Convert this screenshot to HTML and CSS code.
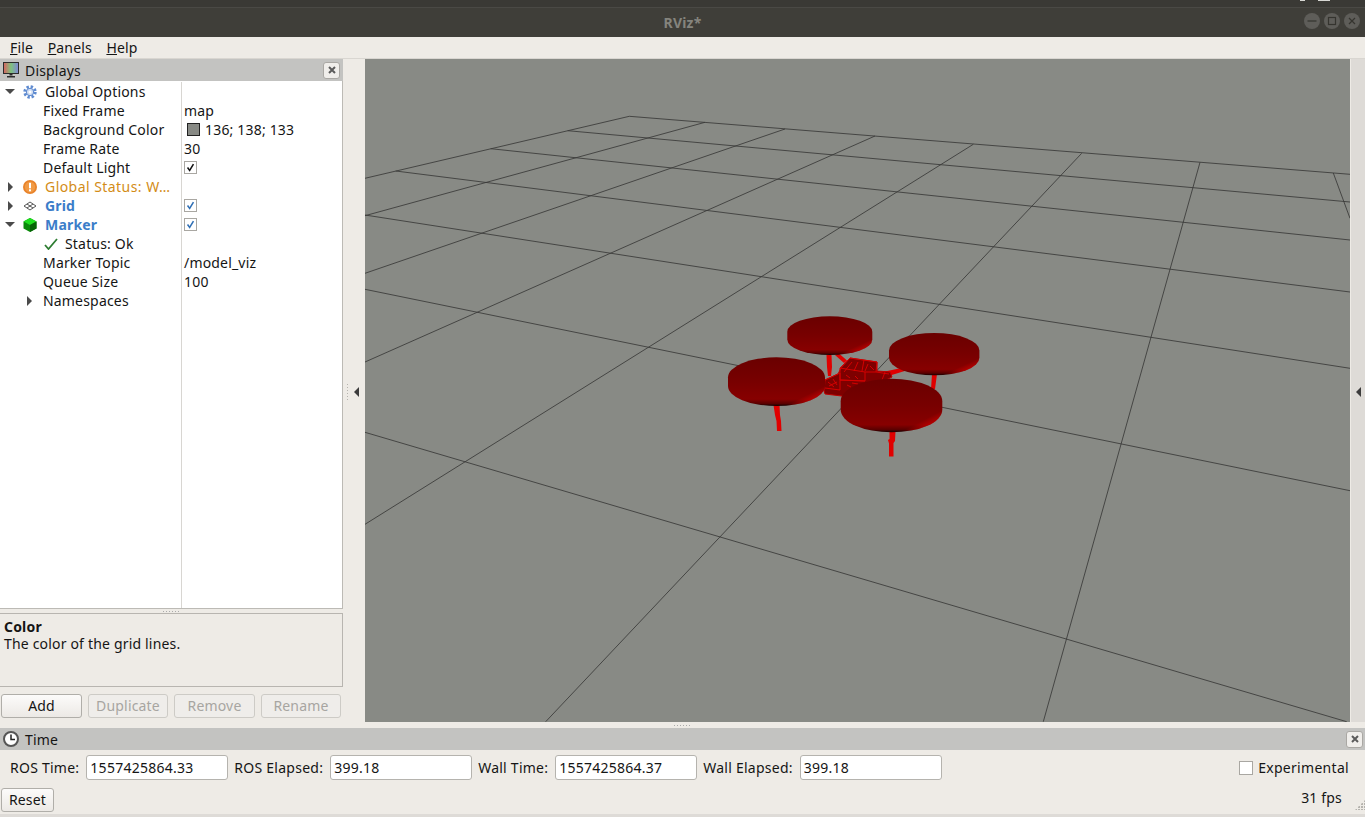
FILE: index.html
```html
<!DOCTYPE html>
<html lang="en">
<head>
<meta charset="utf-8">
<title>RViz*</title>
<link rel="stylesheet" href="styles.css">
</head>
<body>
<div class="app">
  <header class="titlebar">
    <div class="title-top"><span class="sliver sliver-a"></span><span class="sliver sliver-b"></span></div>
    <div class="title-main">
      <span class="title-text">RViz*</span>
      <div class="winbtns">
        <svg class="winbtn" viewBox="0 0 16 16"><circle cx="8" cy="8" r="8" fill="#5e5d59"/><path d="M3.500 8h9" stroke="#35342f" stroke-width="1.200"/></svg>
        <svg class="winbtn" viewBox="0 0 16 16"><circle cx="8" cy="8" r="8" fill="#5e5d59"/><rect x="4.500" y="4.500" width="7" height="7" fill="none" stroke="#35342f" stroke-width="1.200"/></svg>
        <svg class="winbtn" viewBox="0 0 16 16"><circle cx="8" cy="8" r="8" fill="#5e5d59"/><path d="M5 5l6 6M11 5l-6 6" stroke="#35342f" stroke-width="1.200"/></svg>
      </div>
    </div>
  </header>
  <nav class="menubar">
    <span class="menu"><u>F</u>ile</span>
    <span class="menu"><u>P</u>anels</span>
    <span class="menu"><u>H</u>elp</span>
  </nav>
  <main class="main">
    <aside class="dock">
      <div class="dock-title">
        <svg class="ico-monitor" viewBox="0 0 16 16">
          <defs><linearGradient id="scr" x1="0" x2="1" y1="0" y2="0"><stop offset="0" stop-color="#d9605f"/><stop offset=".5" stop-color="#7fc27f"/><stop offset="1" stop-color="#7f86d8"/></linearGradient></defs>
          <rect x=".5" y=".5" width="15" height="11" fill="url(#scr)" stroke="#2c2c2c"/>
          <path d="M6.500 12h3v1.500h-3zM4 14h8v1.500H4z" fill="#2c2c2c"/>
        </svg>
        <span class="dock-name">Displays</span>
        <span class="closebtn"><svg viewBox="0 0 8 8"><path d="M1 1l6 6M7 1L1 7" stroke="#5b5b5b" stroke-width="2"/></svg></span>
      </div>
      <div class="tree">
        <div class="row">
          <div class="name lvl0"><span class="arrow-down"></span>
            <svg class="ico" viewBox="0 0 14 14"><circle cx="7" cy="7" r="5" fill="none" stroke="#5f8bd0" stroke-width="3.400" stroke-dasharray="2.200 1.730"/><circle cx="7" cy="7" r="3.700" fill="#cfdcf2" stroke="#5f8bd0"/><circle cx="7" cy="7" r="1.500" fill="#fff"/></svg>
            <span class="lbl">Global Options</span></div>
          <div class="val"></div>
        </div>
        <div class="row"><div class="name lvl1">Fixed Frame</div><div class="val">map</div></div>
        <div class="row"><div class="name lvl1">Background Color</div><div class="val"><span class="swatch"></span>136; 138; 133</div></div>
        <div class="row"><div class="name lvl1">Frame Rate</div><div class="val">30</div></div>
        <div class="row"><div class="name lvl1">Default Light</div><div class="val"><span class="cb"><svg viewBox="0 0 13 13"><path d="M3 6.500l2.500 3.500L10 2.500" fill="none" stroke="#111" stroke-width="1.800"/></svg></span></div></div>
        <div class="row">
          <div class="name lvl0"><span class="arrow-right"></span>
            <svg class="ico" viewBox="0 0 14 14"><circle cx="7" cy="7" r="7" fill="#e8832a"/><circle cx="7" cy="7" r="5.200" fill="#f19a45"/><rect x="6" y="2.800" width="2" height="5.500" fill="#fff"/><rect x="6" y="9.300" width="2" height="2" fill="#fff"/></svg>
            <span class="lbl warn">Global Status: W…</span></div>
          <div class="val"></div>
        </div>
        <div class="row">
          <div class="name lvl0"><span class="arrow-right"></span>
            <svg class="ico" viewBox="0 0 14 14"><path d="M7 3L13 7 7 11 1 7zM4 5l6 4M10 5L4 9" fill="none" stroke="#555" stroke-width="1"/></svg>
            <span class="lbl strong">Grid</span></div>
          <div class="val"><span class="cb"><svg viewBox="0 0 13 13"><path d="M3 6.500l2.500 3.500L10 2.500" fill="none" stroke="#2f6fb5" stroke-width="1.800"/></svg></span></div>
        </div>
        <div class="row">
          <div class="name lvl0"><span class="arrow-down"></span>
            <svg class="ico" viewBox="0 0 14 14"><path d="M7 0l6.500 3.500v7L7 14 .5 10.500v-7z" fill="#0a8a0a"/><path d="M7 0l6.500 3.500L7 7 .5 3.500z" fill="#1fe01f"/><path d="M7 7l6.500-3.500v7L7 14z" fill="#056405"/></svg>
            <span class="lbl strong">Marker</span></div>
          <div class="val"><span class="cb"><svg viewBox="0 0 13 13"><path d="M3 6.500l2.500 3.500L10 2.500" fill="none" stroke="#2f6fb5" stroke-width="1.800"/></svg></span></div>
        </div>
        <div class="row"><div class="name lvl1"><svg class="ico-check" viewBox="0 0 14 12"><path d="M1 7l3.500 4L13 1" fill="none" stroke="#2e7d32" stroke-width="1.800"/></svg>Status: Ok</div><div class="val"></div></div>
        <div class="row"><div class="name lvl1">Marker Topic</div><div class="val">/model_viz</div></div>
        <div class="row"><div class="name lvl1">Queue Size</div><div class="val">100</div></div>
        <div class="row"><div class="name sub"><span class="arrow-right"></span>Namespaces</div><div class="val"></div></div>
        <div class="row-fill"><div class="fill-name"></div></div>
      </div>
      <div class="vgrip"><span class="dots"></span></div>
      <div class="help">
        <div class="help-title">Color</div>
        <div class="help-text">The color of the grid lines.</div>
      </div>
      <div class="actions">
        <button class="btn btn-add">Add</button>
        <button class="btn btn-dis btn-dup">Duplicate</button>
        <button class="btn btn-dis btn-rem">Remove</button>
        <button class="btn btn-dis btn-ren">Rename</button>
      </div>
    </aside>
    <div class="gutter"><span class="vdots"></span><span class="tri-left"></span></div>
    <div class="viewport">
      <svg class="scene" viewBox="365 59 985 663" preserveAspectRatio="none">
        <defs>
          <linearGradient id="dbase" x1="0" x2="0" y1="0" y2="1"><stop offset="0" stop-color="#6a0000"/><stop offset=".5" stop-color="#780000"/><stop offset=".86" stop-color="#870000"/><stop offset=".95" stop-color="#5a0000"/><stop offset="1" stop-color="#120000"/></linearGradient>
          <linearGradient id="dglow" x1=".55" y1=".45" x2="1" y2=".9"><stop offset=".65" stop-color="#e80000" stop-opacity="0"/><stop offset=".85" stop-color="#e80000" stop-opacity=".55"/></linearGradient>
        </defs>
        <g class="grid">
          <path d="M629.300 116.300L1350 174.300M567.700 130.700L1350 202M490.700 148.700L1350 240M395.700 171L1350 292M365 215L1350 368.300M365 289.300L1350 490.700M365 432.300L1346.700 721.700"/>
          <path d="M629.300 116.300L365 178.300M705 122.300L365 215.700M785 129L365 273.300M875 136L365 362M973.300 144.300L365 524.300M1081.700 153.300L545.700 721.700M1200 162.300L1043.300 721.700M1333.300 173L1350 218.300"/>
        </g>
        <g class="limbs">
          <path d="M826.500 355h5l.5 12-1 9h-3l-1-9zM835 355l4-1.500 8 7-3 2.500zM878 373l28-6 2 3-26 8z"/>
          <path d="M773.500 405h6l.5 10 1 6 .5 10h-4.500l-.5-10-1.500-6zM889.500 431h6l-.5 10-1.500 2v13.500h-4.500v-13l-1-3.500 1.500-1zM932 374h5l-2 15h-4z"/>
        </g>
        <g class="body">
          <path d="M825 380l13-6 3-6 9-10 27 4 0 9 13 1 2 5-20 10-22 10-25-3-1-3z" class="hull"/>
          <path d="M840 368l25 4v9l-25-1zM850 358l27 4-1 10-11 0M825 380l15-7v17M825 388l15 2M840 380l25 1M850 358l-10 10M864 360l-2 11" class="mesh"/>
          <path d="M828 382l6 5M833 379l4 6M829 386l8-4M846 375l4 3M855 376l3 3M852 383l6 1M847 385l4 2M844 372l8-10M858 362l-4 9M868 364l-3 7M870 366l4 4M876 372l13 2M885 372l-3 8" class="spark"/>
        </g>
        <g class="disc">
          <path id="d1" d="M787.300 331.800A42.500 15.500 0 0 1 872.300 331.800V339.500A42.500 15.500 0 0 1 787.300 339.500Z" fill="url(#dbase)"/>
          <path d="M787.300 331.800A42.500 15.500 0 0 1 872.300 331.800V339.500A42.500 15.500 0 0 1 787.300 339.500Z" fill="url(#dglow)"/>
          <path d="M889 350.500A45.200 17.500 0 0 1 979.400 350.500V357.800A45.200 17.500 0 0 1 889 357.800Z" fill="url(#dbase)"/>
          <path d="M889 350.500A45.200 17.500 0 0 1 979.400 350.500V357.800A45.200 17.500 0 0 1 889 357.800Z" fill="url(#dglow)"/>
          <path d="M728 377.300A48.500 20 0 0 1 825 377.300V386A48.500 20 0 0 1 728 386Z" fill="url(#dbase)"/>
          <path d="M728 377.300A48.500 20 0 0 1 825 377.300V386A48.500 20 0 0 1 728 386Z" fill="url(#dglow)"/>
          <path d="M840.700 401.200A50.800 22.500 0 0 1 942.300 401.200V409.800A50.800 22.500 0 0 1 840.700 409.800Z" fill="url(#dbase)"/>
          <path d="M840.700 401.200A50.800 22.500 0 0 1 942.300 401.200V409.800A50.800 22.500 0 0 1 840.700 409.800Z" fill="url(#dglow)"/>
        </g>
      </svg>
    </div>
    <div class="gutter-r"><span class="tri-left"></span></div>
  </main>
  <div class="hgrip"><span class="dots"></span></div>
  <section class="time">
    <div class="time-title">
      <svg class="ico-clock" viewBox="0 0 16 16"><circle cx="8" cy="8" r="7" fill="#fff" stroke="#555" stroke-width="2"/><path d="M8 3.500V8.500H12" fill="none" stroke="#222" stroke-width="1.500"/></svg>
      <span class="dock-name">Time</span>
      <span class="closebtn"><svg viewBox="0 0 8 8"><path d="M1 1l6 6M7 1L1 7" stroke="#5b5b5b" stroke-width="2"/></svg></span>
    </div>
    <div class="time-row">
      <span class="tl tl-first">ROS Time:</span><input class="tf" value="1557425864.33" readonly>
      <span class="tl">ROS Elapsed:</span><input class="tf" value="399.18" readonly>
      <span class="tl">Wall Time:</span><input class="tf" value="1557425864.37" readonly>
      <span class="tl">Wall Elapsed:</span><input class="tf" value="399.18" readonly>
      <span class="exp"><span class="cb cb-exp"></span>Experimental</span>
    </div>
    <div class="status-row">
      <button class="btn btn-reset">Reset</button>
      <span class="fps">31 fps</span>
      <span class="sizegrip"></span>
    </div>
  </section>
  <div class="footer"></div>
</div>
</body>
</html>
```
FILE: styles.css
```css
* { box-sizing: border-box; }
html, body { margin: 0; padding: 0; }
body { background: #eeebe6; font-family: "Noto Sans", "Open Sans", sans-serif; font-size: 14px; letter-spacing: .18px; color: #151515; overflow: hidden; }
.app { width: 1365px; height: 817px; display: flex; flex-direction: column; overflow: hidden; }

.titlebar { height: 37px; background: #3f3e39; display: flex; flex-direction: column; flex: none; }
.title-top { height: 8px; background: #3a3935; border-bottom: 1px solid #4a4945; position: relative; }
.sliver { position: absolute; top: 0; height: 1px; background: #d8d8d4; }
.sliver-a { left: 1300px; width: 5px; }
.sliver-b { left: 1318px; width: 12px; }
.title-main { flex: 1; display: flex; align-items: center; justify-content: center; position: relative; }
.title-text { color: #85847e; font-weight: 700; font-size: 14px; margin-top: -1px; }
.winbtns { position: absolute; right: 5px; top: 5px; display: flex; gap: 4px; }
.winbtn { width: 16px; height: 16px; display: block; }

.menubar { height: 22px; flex: none; display: flex; align-items: center; padding-left: 10px; background: #eeebe6; border-bottom: 1px solid #d9d6d1; }
.menu { margin-right: 14.500px; line-height: 20px; }

.main { height: 664px; flex: none; display: flex; }
.dock { width: 343px; flex: none; display: flex; flex-direction: column; }
.dock-title, .time-title { height: 22px; flex: none; background: #c3c3c1; display: flex; align-items: center; padding: 0 2px 0 3px; }
.dock-title { padding-right: 3px; }
.ico-monitor { width: 16px; height: 16px; display: block; }
.dock-name { margin-left: 6px; flex: 1; }
.closebtn { width: 17px; height: 17px; background: #f0eeeb; border: 1px solid #aaa8a4; border-radius: 3px; display: flex; align-items: center; justify-content: center; }
.closebtn svg { width: 8px; height: 8px; display: block; }

.tree { flex: 1; background: #fff; border-right: 1px solid #bcbab5; border-bottom: 1px solid #bcbab5; display: flex; flex-direction: column; min-height: 0; padding-top: 1px; }
.row { height: 19px; flex: none; display: flex; line-height: 19px; }
.row-fill { flex: 1; }
.fill-name { width: 182px; height: 100%; border-right: 1px solid #d8d6d2; }
.name { width: 182px; flex: none; border-right: 1px solid #d8d6d2; display: flex; align-items: center; white-space: nowrap; overflow: hidden; }
.lvl0 { padding-left: 5px; }
.lvl1 { padding-left: 43px; }
.sub { padding-left: 24px; }
.sub .arrow-right { margin-right: 11px; }
.val { flex: 1; padding-left: 2px; display: flex; align-items: center; }
.arrow-down { width: 0; height: 0; border-left: 5px solid transparent; border-right: 5px solid transparent; border-top: 5px solid #4a4a4a; flex: none; margin-right: 8px; }
.arrow-right { width: 0; height: 0; border-top: 5px solid transparent; border-bottom: 5px solid transparent; border-left: 5px solid #4a4a4a; flex: none; margin: 0 10px 0 3px; }
.ico { width: 14px; height: 14px; flex: none; display: block; }
.lbl { margin-left: 8px; }
.strong { font-weight: 700; color: #3b7dc9; }
.warn { color: #d38c17; letter-spacing: .45px; }
.swatch { width: 13px; height: 13px; background: #888a85; border: 1px solid #222; margin: 0 5px 0 3px; flex: none; }
.cb { width: 13px; height: 13px; background: #fff; border: 1px solid #a9a7a2; display: inline-block; flex: none; }
.cb svg { width: 11px; height: 11px; display: block; }
.ico-check { width: 14px; height: 12px; flex: none; margin: 0 7px 0 1px; }

.vgrip { height: 4px; flex: none; display: flex; justify-content: center; align-items: center; }
.dots { width: 17px; height: 1px; background: repeating-linear-gradient(90deg, #aaa 0 1px, transparent 1px 3px); display: block; }
.help { height: 74px; flex: none; border: 1px solid #b8b5b0; border-left: none; padding: 4px 4px; line-height: 17px; }
.help-title { font-weight: 700; }
.actions { display: flex; gap: 6px; padding: 7px 2px 5px 1px; flex: none; }
.btn { height: 24px; padding: 0; border: 1px solid #b0aea9; border-radius: 3px; background: linear-gradient(#fcfbfa, #ece9e5); font: inherit; letter-spacing: inherit; color: #151515; line-height: 20px; }
.btn-add { width: 81px; }
.btn-dup { width: 80px; }
.btn-rem { width: 81px; }
.btn-ren { width: 80px; }
.btn-dis { color: #a7a5a1; background: #efedea; border-color: #cdcbc6; }

.gutter { width: 22px; flex: none; display: flex; align-items: center; padding-top: 2px; position: relative; }
.vdots { width: 1px; height: 16px; margin-left: 4px; background: repeating-linear-gradient(#b5b3ae 0 1px, transparent 1px 3px); }
.tri-left { width: 0; height: 0; border-top: 5px solid transparent; border-bottom: 5px solid transparent; border-right: 5px solid #3c3c3c; display: block; }
.gutter .tri-left { margin-left: 6px; }
.viewport { width: 985px; height: 663px; flex: none; background: #888a85; }
.scene { width: 985px; height: 663px; display: block; }
.grid path { fill: none; stroke: #3a3a38; stroke-width: 1; opacity: .85; }
.limbs path { fill: #e00000; }
.hull { fill: #7e0000; stroke: #c00000; stroke-width: 1; }
.mesh { fill: none; stroke: #d40000; stroke-width: 1; }
.spark { fill: none; stroke: #e80000; stroke-width: .8; }
.gutter-r { width: 15px; flex: none; height: 663px; background: #dedbd7; border-left: 1px solid #eeebe6; display: flex; align-items: center; padding: 2px 0 0 5px; }

.hgrip { height: 5px; flex: none; display: flex; justify-content: center; align-items: center; }
.time { height: 86px; flex: none; display: flex; flex-direction: column; }
.ico-clock { width: 16px; height: 16px; display: block; }
.time-title { padding-left: 3px; }
.time-row { height: 25px; margin-top: 5px; display: flex; align-items: center; padding-right: 16px; }
.tl { margin: 0 7px 0 6px; white-space: nowrap; letter-spacing: .25px; }
.tl-first { margin-left: 10px; }
.tf { width: 142px; height: 25px; border: 1px solid #b5b3ae; border-radius: 3px; background: #fff; font: inherit; letter-spacing: .25px; color: #151515; padding: 0 2px 0 3px; outline: none; flex: none; }
.exp { margin-left: auto; display: flex; align-items: center; letter-spacing: .3px; }
.cb-exp { width: 14px; height: 14px; margin-right: 5px; }
.status-row { height: 24px; margin-top: 8px; display: flex; align-items: center; position: relative; padding-left: 1px; padding-right: 23px; }
.btn-reset { width: 53px; }
.fps { margin-left: auto; margin-top: -6px; }
.sizegrip { position: absolute; right: 0; bottom: 2px; width: 10px; height: 10px; background: radial-gradient(circle at 1px 1px, #b5b3ae 1px, transparent 1px) 0 0 / 3px 3px; clip-path: polygon(100% 0, 100% 100%, 0 100%); }
.footer { height: 3px; flex: none; background: #dedbd7; }
```
